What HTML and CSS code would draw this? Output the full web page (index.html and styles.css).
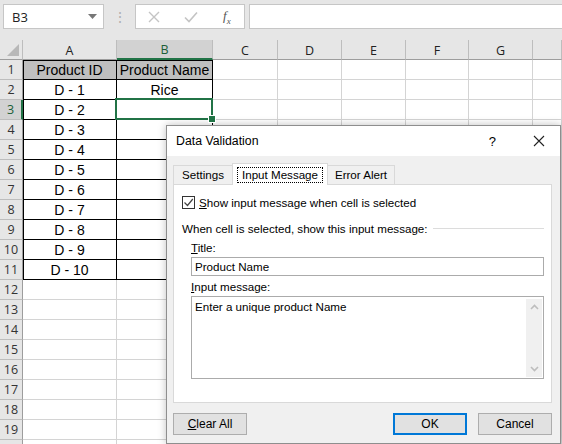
FILE: index.html
```html
<!DOCTYPE html>
<html lang="en">
<head>
    <meta charset="UTF-8">
    <title>Data Validation - Input Message</title>
    <link rel="stylesheet" href="styles.css">
</head>
<body>
    <!-- Name box + formula bar -->
    <div class="formula-bar">
        <div class="name-box">
            <span>B3</span>
            <svg class="drop" width="9" height="5" viewBox="0 0 9 5"><path d="M0 0h9L4.5 5z" fill="#777"/></svg>
        </div>
        <div class="grip">⋮</div>
        <div class="fx-buttons">
            <svg class="ic-cancel" width="12" height="12" viewBox="0 0 12 12"><path d="M1 1l10 10M11 1L1 11" stroke="#c4c4c4" stroke-width="1.4"/></svg>
            <svg class="ic-enter" width="14" height="12" viewBox="0 0 14 12"><path d="M1 6.5l4 4L13 1.5" stroke="#c4c4c4" stroke-width="1.6" fill="none"/></svg>
            <span class="fx">f<sub>x</sub></span>
        </div>
        <div class="formula-input"></div>
    </div>

    <!-- Worksheet grid -->
    <div class="sheet">
        <div class="corner"><span class="tri"></span></div><div class="ch">A</div><div class="ch sel">B</div><div class="ch">C</div><div class="ch">D</div><div class="ch">E</div><div class="ch">F</div><div class="ch">G</div><div class="ch"></div>

        <div class="rh">1</div><div class="c t head la tp">Product ID</div><div class="c t head tp">Product Name</div><div class="c"></div><div class="c"></div><div class="c"></div><div class="c"></div><div class="c"></div><div class="c"></div>
        <div class="rh">2</div><div class="c t la">D - 1</div><div class="c t">Rice</div><div class="c"></div><div class="c"></div><div class="c"></div><div class="c"></div><div class="c"></div><div class="c"></div>
        <div class="rh rsel">3</div><div class="c t la">D - 2</div><div class="c t active"></div><div class="c"></div><div class="c"></div><div class="c"></div><div class="c"></div><div class="c"></div><div class="c"></div>
        <div class="rh">4</div><div class="c t la">D - 3</div><div class="c t"></div><div class="c"></div><div class="c"></div><div class="c"></div><div class="c"></div><div class="c"></div><div class="c"></div>
        <div class="rh">5</div><div class="c t la">D - 4</div><div class="c t"></div><div class="c"></div><div class="c"></div><div class="c"></div><div class="c"></div><div class="c"></div><div class="c"></div>
        <div class="rh">6</div><div class="c t la">D - 5</div><div class="c t"></div><div class="c"></div><div class="c"></div><div class="c"></div><div class="c"></div><div class="c"></div><div class="c"></div>
        <div class="rh">7</div><div class="c t la">D - 6</div><div class="c t"></div><div class="c"></div><div class="c"></div><div class="c"></div><div class="c"></div><div class="c"></div><div class="c"></div>
        <div class="rh">8</div><div class="c t la">D - 7</div><div class="c t"></div><div class="c"></div><div class="c"></div><div class="c"></div><div class="c"></div><div class="c"></div><div class="c"></div>
        <div class="rh">9</div><div class="c t la">D - 8</div><div class="c t"></div><div class="c"></div><div class="c"></div><div class="c"></div><div class="c"></div><div class="c"></div><div class="c"></div>
        <div class="rh">10</div><div class="c t la">D - 9</div><div class="c t"></div><div class="c"></div><div class="c"></div><div class="c"></div><div class="c"></div><div class="c"></div><div class="c"></div>
        <div class="rh">11</div><div class="c t la">D - 10</div><div class="c t"></div><div class="c"></div><div class="c"></div><div class="c"></div><div class="c"></div><div class="c"></div><div class="c"></div>
        <div class="rh">12</div><div class="c"></div><div class="c"></div><div class="c"></div><div class="c"></div><div class="c"></div><div class="c"></div><div class="c"></div><div class="c"></div>
        <div class="rh">13</div><div class="c"></div><div class="c"></div><div class="c"></div><div class="c"></div><div class="c"></div><div class="c"></div><div class="c"></div><div class="c"></div>
        <div class="rh">14</div><div class="c"></div><div class="c"></div><div class="c"></div><div class="c"></div><div class="c"></div><div class="c"></div><div class="c"></div><div class="c"></div>
        <div class="rh">15</div><div class="c"></div><div class="c"></div><div class="c"></div><div class="c"></div><div class="c"></div><div class="c"></div><div class="c"></div><div class="c"></div>
        <div class="rh">16</div><div class="c"></div><div class="c"></div><div class="c"></div><div class="c"></div><div class="c"></div><div class="c"></div><div class="c"></div><div class="c"></div>
        <div class="rh">17</div><div class="c"></div><div class="c"></div><div class="c"></div><div class="c"></div><div class="c"></div><div class="c"></div><div class="c"></div><div class="c"></div>
        <div class="rh">18</div><div class="c"></div><div class="c"></div><div class="c"></div><div class="c"></div><div class="c"></div><div class="c"></div><div class="c"></div><div class="c"></div>
        <div class="rh">19</div><div class="c"></div><div class="c"></div><div class="c"></div><div class="c"></div><div class="c"></div><div class="c"></div><div class="c"></div><div class="c"></div>
        <div class="rh"></div><div class="c"></div><div class="c"></div><div class="c"></div><div class="c"></div><div class="c"></div><div class="c"></div><div class="c"></div><div class="c"></div>
    </div>

    <!-- Data Validation dialog -->
    <div class="dialog">
        <div class="dlg-title">
            <span class="dlg-name">Data Validation</span>
            <span class="dlg-help">?</span>
            <svg class="dlg-close" width="12" height="12" viewBox="0 0 12 12"><path d="M1 1l10 10M11 1L1 11" stroke="#222" stroke-width="1.1"/></svg>
        </div>
        <div class="dlg-body">
            <div class="tabs">
                <div class="tab tab-settings">Settings</div>
                <div class="tab current"><span class="focus">Input Message</span></div>
                <div class="tab tab-error">Error Alert</div>
            </div>
            <div class="panel">
                <div class="check-row">
                    <span class="checkbox">
                        <svg width="11" height="11" viewBox="0 0 11 11"><path d="M1.5 5.5l3 3L9.8 2" stroke="#444" stroke-width="1.2" fill="none"/></svg>
                    </span>
                    <span><u>S</u>how input message when cell is selected</span>
                </div>
                <div class="group-label">
                    <span>When cell is selected, show this input message:</span>
                    <span class="rule"></span>
                </div>
                <div class="field-label"><u>T</u>itle:</div>
                <div class="textbox">Product Name</div>
                <div class="field-label second"><u>I</u>nput message:</div>
                <div class="textarea">
                    <span class="msg">Enter a unique product Name</span>
                    <div class="scroll">
                        <svg width="9" height="6" viewBox="0 0 9 6"><path d="M1 5l3.5-3.5L8 5" stroke="#bdbdbd" stroke-width="1.6" fill="none"/></svg>
                        <svg width="9" height="6" viewBox="0 0 9 6"><path d="M1 1l3.5 3.5L8 1" stroke="#bdbdbd" stroke-width="1.6" fill="none"/></svg>
                    </div>
                </div>
            </div>
            <div class="buttons">
                <button class="btn"><u>C</u>lear All</button>
                <span class="spacer"></span>
                <button class="btn ok">OK</button>
                <button class="btn">Cancel</button>
            </div>
        </div>
    </div>
</body>
</html>
```

FILE: styles.css
```css
* {
    box-sizing: border-box;
    margin: 0;
    padding: 0;
}
body {
    width: 562px;
    height: 444px;
    overflow: hidden;
    position: relative;
    background-color: #e6e6e6;
    font-family: "Liberation Sans", Arial, sans-serif;
}

/* formula bar */
.formula-bar {
    display: flex;
    align-items: center;
    height: 40px;
    padding: 4px 0 11px 3px;
    background-color: #e6e6e6;
}
.name-box {
    display: flex;
    align-items: center;
    justify-content: space-between;
    width: 101px;
    height: 25px;
    padding: 0 6px 0 8px;
    background-color: #fff;
    border: 1px solid #c6c6c6;
    font-family: "Open Sans", sans-serif;
    font-size: 13px;
    color: #222;
}
.grip {
    width: 31px;
    text-align: center;
    color: #b0b0b0;
    font-size: 14px;
}
.fx-buttons {
    display: flex;
    align-items: center;
    width: 110px;
    height: 25px;
    padding-left: 12px;
    background-color: #fff;
    border: 1px solid #c6c6c6;
}
.ic-enter {
    margin-left: 24px;
}
.fx {
    margin-left: 25px;
    font-family: "Liberation Serif", serif;
    font-style: italic;
    font-size: 13px;
    color: #555;
}
.fx sub {
    font-size: 9px;
}
.formula-input {
    flex: 1;
    height: 25px;
    margin-left: 4px;
    background-color: #fff;
    border: 1px solid #c6c6c6;
    border-right: none;
}

/* sheet */
.sheet {
    display: grid;
    grid-template-columns: 23px 94px 96px 65px 64px 64px 63px 64px 1fr;
    grid-auto-rows: 20px;
    background-color: #fff;
}
.corner {
    position: relative;
    background-color: #e6e6e6;
    border-right: 1px solid #bdbdbd;
    border-bottom: 1px solid #9d9d9d;
}
.tri {
    position: absolute;
    right: 3px;
    bottom: 3px;
    border-left: 12px solid transparent;
    border-bottom: 12px solid #b8b8b8;
}
.ch {
    display: flex;
    align-items: center;
    justify-content: center;
    background-color: #e6e6e6;
    border-right: 1px solid #bdbdbd;
    border-bottom: 1px solid #9d9d9d;
    font-family: "Open Sans", sans-serif;
    font-size: 12.5px;
    color: #222;
    padding-top: 1px;
}
.ch.sel {
    background-color: #d2d2d2;
    border-bottom: 2px solid #217346;
    color: #1b5e38;
}
.rh {
    display: flex;
    align-items: center;
    justify-content: center;
    background-color: #e6e6e6;
    border-right: 1px solid #9d9d9d;
    border-bottom: 1px solid #bdbdbd;
    font-family: "Open Sans", sans-serif;
    font-size: 12.5px;
    color: #333;
}
.rh.rsel {
    background-color: #d2d2d2;
    border-right: 2px solid #217346;
    color: #1b5e38;
}
.c {
    display: flex;
    align-items: center;
    justify-content: center;
    border-right: 1px solid #d4d4d4;
    border-bottom: 1px solid #d4d4d4;
    font-size: 14px;
    color: #000;
}
.c.t {
    border-right-color: #000;
    border-bottom-color: #000;
}
.c.head {
    background-color: #bfbfbf;
}
.c.la {
    box-shadow: inset 1px 0 0 #000;
}
.c.tp {
    box-shadow: inset 0 1px 0 #000;
}
.c.la.tp {
    box-shadow: inset 1px 0 0 #000, inset 0 1px 0 #000;
}
.c.active {
    position: relative;
}
.c.active::after {
    content: "";
    position: absolute;
    left: -2px;
    top: -2px;
    right: -1px;
    bottom: -1px;
    border: 2px solid #217346;
}
.c.active::before {
    content: "";
    position: absolute;
    right: -4px;
    bottom: -4px;
    width: 6px;
    height: 6px;
    background-color: #217346;
    border: 1px solid #fff;
    z-index: 1;
}

/* dialog */
.dialog {
    position: absolute;
    left: 166px;
    top: 125px;
    width: 395px;
    height: 319px;
    background-color: #f0f0f0;
    border: 1px solid #8e8e8e;
    box-shadow: 0 0 8px rgba(0, 0, 0, 0.25);
    font-size: 11.6px;
    color: #000;
}
.dlg-title {
    display: flex;
    align-items: center;
    height: 30px;
    padding: 0 15px 0 9px;
    background-color: #fff;
    font-size: 12.3px;
}
.dlg-name {
    flex: 1;
}
.dlg-help {
    margin-right: 37px;
    font-size: 13px;
}
.dlg-body {
    padding: 7px 8px 0 6px;
}
.tabs {
    display: flex;
    align-items: flex-end;
    height: 21px;
}
.tab {
    height: 19px;
    padding-top: 2px;
    text-align: center;
    border: 1px solid #d9d9d9;
    border-bottom: none;
    background-color: #f0f0f0;
}
.tab-settings {
    width: 59px;
    border-right: none;
}
.tab-error {
    width: 67px;
    border-left: none;
}
.tab.current {
    position: relative;
    width: 96px;
    height: 22px;
    margin-bottom: -1px;
    padding-top: 3px;
    background-color: #fff;
    z-index: 1;
}
.focus {
    display: inline-block;
    padding: 0 4px 1px;
    border: 1px dotted #000;
}
.panel {
    height: 219px;
    padding: 11px 7px 0 8px;
    background-color: #fff;
    border: 1px solid #d9d9d9;
}
.check-row {
    display: flex;
    align-items: center;
    gap: 4px;
    height: 13px;
}
.checkbox {
    display: flex;
    align-items: center;
    justify-content: center;
    width: 13px;
    height: 13px;
    border: 1px solid #333;
}
.group-label {
    display: flex;
    align-items: center;
    gap: 5px;
    margin-top: 12px;
    height: 14px;
}
.rule {
    flex: 1;
    border-top: 1px solid #dcdcdc;
}
.field-label {
    margin: 6px 0 2px 9px;
    height: 14px;
}
.field-label.second {
    margin-top: 4px;
}
.textbox {
    display: flex;
    align-items: center;
    height: 19px;
    margin-left: 9px;
    padding-left: 3px;
    border: 1px solid #ababab;
}
.textarea {
    display: flex;
    justify-content: space-between;
    height: 83px;
    margin-left: 9px;
    padding: 3px 1px 1px 3px;
    border: 1px solid #ababab;
}
.scroll {
    display: flex;
    flex-direction: column;
    justify-content: space-between;
    align-items: center;
    width: 16px;
    margin-top: -1px;
    padding: 5px 0 5px;
    background-color: #f0f0f0;
}
.buttons {
    display: flex;
    gap: 11px;
    margin-top: 10px;
}
.spacer {
    flex: 1;
}
.btn {
    width: 74px;
    height: 22px;
    background-color: #e1e1e1;
    border: 1px solid #adadad;
    font-family: inherit;
    font-size: 12px;
    color: #000;
}
.btn.ok {
    border: 2px solid #0078d7;
}
```
